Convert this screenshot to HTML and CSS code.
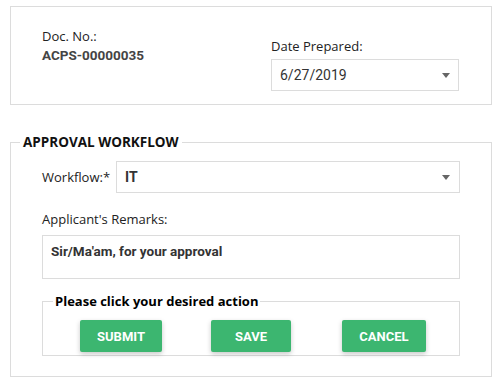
FILE: index.html
```html
<!DOCTYPE html>
<html>
<head>
<meta charset="utf-8">
<link rel="stylesheet" href="styles.css">
</head>
<body>
<div class="page">
  <section class="doc-box">
    <div class="doc-col">
      <div class="label">Doc. No.:</div>
      <div class="doc-value">ACPS-00000035</div>
    </div>
    <div class="date-col">
      <div class="label">Date Prepared:</div>
      <div class="select date-select">
        <span class="select-text">6/27/2019</span>
        <span class="caret"></span>
      </div>
    </div>
  </section>

  <fieldset class="workflow">
    <legend class="workflow-legend">APPROVAL WORKFLOW</legend>
    <div class="wf-row">
      <span class="label wf-label">Workflow:*</span>
      <div class="select wf-select">
        <span class="select-text wf-text">IT</span>
        <span class="caret"></span>
      </div>
    </div>
    <div class="label remarks-label">Applicant's Remarks:</div>
    <div class="remarks">Sir/Ma'am, for your approval</div>
    <fieldset class="actions">
      <legend class="actions-legend">Please click your desired action</legend>
      <div class="btn-row">
        <button class="btn btn-submit">SUBMIT</button>
        <button class="btn btn-save">SAVE</button>
        <button class="btn btn-cancel">CANCEL</button>
      </div>
    </fieldset>
  </fieldset>
</div>
</body>
</html>
```

FILE: styles.css
```css
* { box-sizing: border-box; }
html, body { margin: 0; padding: 0; background: #fff; }
body {
  font-family: "Open Sans", "Noto Sans", sans-serif;
  color: #222;
  width: 504px;
  height: 386px;
  overflow: hidden;
}
.page {
  padding: 6px 12px 0 10px;
}
.doc-box {
  display: flex;
  height: 99px;
  border: 1px solid #dcdcdc;
  padding: 20px 0 0 31px;
}
.label {
  font-size: 13px;
  line-height: 18px;
  color: #222;
}
.doc-col { width: 229px; }
.doc-value {
  font-family: "Roboto", "Liberation Sans", sans-serif;
  font-weight: 700;
  font-size: 13.5px;
  line-height: 18px;
  color: #444;
  margin-top: 1px;
}
.date-col {
  width: 188px;
  padding-top: 10px;
}
.date-col .label { margin-bottom: 4px; }
.select {
  display: flex;
  align-items: center;
  justify-content: space-between;
  border: 1px solid #dcdcdc;
  background: #fff;
}
.date-select {
  height: 32px;
  padding: 0 8px 0 8px;
}
.select-text {
  font-family: "Roboto", "Liberation Sans", sans-serif;
  font-size: 14px;
  color: #333;
}
.caret {
  width: 0;
  height: 0;
  border-left: 4.5px solid transparent;
  border-right: 4.5px solid transparent;
  border-top: 5px solid #666;
}
.workflow {
  margin: 28px 0 0 0;
  border: 1px solid #dcdcdc;
  padding: 10px 31px 12px 31px;
  height: 244px;
}
.workflow-legend {
  font-family: "Open Sans", "Noto Sans", sans-serif;
  font-weight: 700;
  font-size: 13.5px;
  color: #111;
  padding: 0 3px;
  margin-left: -22px;
}
.wf-row {
  display: flex;
  align-items: center;
}
.wf-label {
  width: 74px;
}
.wf-select {
  flex: 1;
  height: 32px;
  padding: 0 9px 0 8px;
}
.wf-text {
  font-weight: 700;
  color: #333;
}
.remarks-label {
  margin-top: 17px;
}
.remarks {
  margin-top: 7px;
  height: 44px;
  border: 1px solid #dcdcdc;
  padding: 7px 8px 6px;
  font-family: "Roboto", "Liberation Sans", sans-serif;
  font-weight: 700;
  font-size: 13.5px;
  color: #333;
}
.actions {
  margin: 13px 0 0 0;
  border: 1px solid #dcdcdc;
  padding: 10px 0 0 37px;
  height: 64px;
}
.actions-legend {
  font-family: "Open Sans", "Noto Sans", sans-serif;
  font-weight: 700;
  font-size: 13px;
  color: #000;
  padding: 0 2px;
  margin-left: -27px;
}
.btn-row {
  display: flex;
  gap: 49px;
}
.btn {
  height: 32px;
  border: none;
  border-radius: 2px;
  background: #3cb670;
  color: #fff;
  font-family: "Roboto", "Liberation Sans", sans-serif;
  font-weight: 700;
  font-size: 13px;
  box-shadow: 0 2px 5px rgba(0,0,0,0.22);
  padding: 0;
}
.btn-submit { width: 82px; }
.btn-save { width: 80px; }
.btn-cancel { width: 84px; margin-left: 2px; }
```
